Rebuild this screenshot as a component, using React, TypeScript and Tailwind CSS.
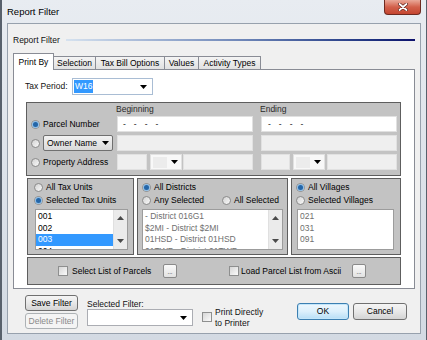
import type { ReactNode } from "react";

function Arrow({ up = false, color = "#000" }: { up?: boolean; color?: string }) {
  return (
    <svg width="7" height="4" viewBox="0 0 7 4" className="shrink-0">
      <path d={up ? "M0 4h7L3.5 0z" : "M0 0h7L3.5 4z"} fill={color} />
    </svg>
  );
}

function Radio({ on = false }: { on?: boolean }) {
  return (
    <span className="w-[9px] h-[9px] shrink-0 rounded-full border border-[#8b8b8b] bg-linear-to-br from-[#d2d2d2] to-[#fafafa] flex items-center justify-center">
      {on && <span className="w-[5px] h-[5px] rounded-full bg-[#2466a8] shadow-[0_0_0_1px_#8dbde6]" />}
    </span>
  );
}

function Check() {
  return <div className="w-[10px] h-[10px] shrink-0 border border-[#8e8f8f] bg-linear-to-br from-[#d6d6d6] to-[#fbfbfb]" />;
}

function Btn({
  children,
  className = "",
  kind = "normal",
}: {
  children: ReactNode;
  className?: string;
  kind?: "normal" | "primary" | "disabled";
}) {
  const look =
    kind === "primary"
      ? "border-[#3c7fb1] bg-linear-to-b from-[#eef7fd] via-[#dcf0fc] to-[#b7def6] shadow-[inset_0_0_0_1px_#c4e6fa]"
      : kind === "disabled"
      ? "border-[#adb2b5] bg-[#f4f4f4] text-[#8a8a8a]"
      : "border-[#707070] bg-linear-to-b from-[#f5f5f5] via-[#e8e8e8] to-[#d4d4d4]";
  return <div className={`flex items-center justify-center rounded-[3px] border ${look} ${className}`}>{children}</div>;
}

function Dots() {
  return (
    <div className="w-[14px] h-[14px] shrink-0 rounded-[2px] border border-[#8a8a8a] bg-linear-to-b from-[#fafafa] to-[#e2e2e2] flex items-end justify-center pb-[2px] text-[6px] leading-none">
      ...
    </div>
  );
}

function ListBox({
  items,
  sel = -1,
  gray = false,
  scroll = true,
  className = "",
}: {
  items: string[];
  sel?: number;
  gray?: boolean;
  scroll?: boolean;
  className?: string;
}) {
  return (
    <div className={`h-[41px] flex bg-white border border-[#9c9c9c] overflow-hidden ${className}`}>
      <div className="flex-1 pt-px overflow-hidden">
        {items.map((it, i) => (
          <div
            key={it}
            className={`h-[11.5px] leading-[11.5px] pl-[2px] whitespace-nowrap ${
              i === sel ? "bg-[#3399ff] text-white" : gray ? "text-[#6f6f6f]" : "text-black"
            }`}
          >
            {it}
          </div>
        ))}
      </div>
      {scroll && (
        <div className="w-[14px] bg-[#ebebeb] border-l border-[#e0e0e0] flex flex-col items-center justify-between py-[6px]">
          <Arrow up color="#4a4a4a" />
          <Arrow color="#4a4a4a" />
        </div>
      )}
    </div>
  );
}

function Field({ className = "", white = false, children }: { className?: string; white?: boolean; children?: ReactNode }) {
  return (
    <div className={`h-[16px] border border-[#e1e1e1] flex items-center ${white ? "bg-white" : "bg-[#efefef]"} ${className}`}>
      {children}
    </div>
  );
}

function MiniCombo() {
  return (
    <div className="w-[32px] h-[16px] shrink-0 border border-[#e1e1e1] bg-[#f8f8f8] flex items-center">
      <span className="ml-[2px] w-[14px] h-[11px] bg-[#ececec]" />
      <span className="ml-auto mr-[3px]">
        <Arrow />
      </span>
    </div>
  );
}

function Dashes() {
  return (
    <div className="flex gap-[8px] pl-[5px] text-[#222]">
      <span>-</span>
      <span>-</span>
      <span>-</span>
      <span>-</span>
    </div>
  );
}

const tabs = [
  { label: "Selection", w: "w-[43px]" },
  { label: "Tax Bill Options", w: "w-[70px]" },
  { label: "Values", w: "w-[35px]" },
  { label: "Activity Types", w: "w-[63px]" },
];

export default function App() {
  return (
    <div className="w-[427px] h-[340px] flex flex-col overflow-hidden bg-linear-to-b from-[#e8ecf1] via-[#dde3ea] to-[#d3dae3] border-l-2 border-r border-[#58616c] font-['Liberation_Sans',Arial,sans-serif] text-[8.5px] leading-none text-black">
      {/* title bar */}
      <div className="h-[23px] flex items-center shrink-0">
        <span className="pl-[5px] text-[9.5px]">Report Filter</span>
        <div className="self-start ml-auto mr-[5px] w-[37px] h-[15px] rounded-b-[4px] border border-t-0 border-[#6e2a20] bg-linear-to-b from-[#e9a899] via-[#d2604b] to-[#c4452f] flex items-center justify-center">
          <svg width="10" height="8" viewBox="0 0 10 8">
            <path d="M1.5 1l7 6M8.5 1l-7 6" stroke="#5a1f18" strokeWidth="3.2" strokeLinecap="round" />
            <path d="M1.5 1l7 6M8.5 1l-7 6" stroke="#ffffff" strokeWidth="1.8" strokeLinecap="round" />
          </svg>
        </div>
      </div>

      {/* client area */}
      <div className="mx-[5px] h-[311px] shrink-0 bg-[#f0f0f0] border border-[#97a1ad] flex flex-col">
        <div className="mt-[11px] h-[10px] flex items-center pl-[5px] pr-[5px]">
          <span className="text-[#111]">Report Filter</span>
          <div className="ml-[6px] flex-1 h-[2px] bg-linear-to-r from-[#d6e2ef] via-[#6f87b8] to-[#0e106c]" />
        </div>

        {/* tabs */}
        <div className="mt-[8px] h-[17px] flex items-end pl-[5px] -mb-px relative z-10">
          <div className="w-[41px] h-[17px] bg-white border border-b-0 border-[#898c95] flex items-center justify-center pt-px">
            Print By
          </div>
          {tabs.map((t) => (
            <div
              key={t.label}
              className={`${t.w} h-[14px] -ml-px border border-[#898c95] bg-linear-to-b from-[#f4f4f4] to-[#e1e1e1] flex items-center justify-center`}
            >
              {t.label}
            </div>
          ))}
        </div>

        {/* tab panel */}
        <div className="ml-[5px] w-[402px] h-[220px] bg-white border border-[#898c95] flex flex-col">
          <div className="mt-[8px] h-[17px] flex items-center pl-[11px]">
            <span className="w-[47px] text-[#111]">Tax Period:</span>
            <div className="w-[81px] h-[17px] border border-[#a9bdd4] bg-white flex items-center px-px">
              <span className="bg-[#3399ff] text-white h-[13px] leading-[13px] px-px">W16</span>
              <span className="ml-auto mr-[4px]">
                <Arrow />
              </span>
            </div>
          </div>

          {/* parcel / owner / address */}
          <div className="mt-[7px] ml-[12px] w-[375px] h-[74px] bg-[#c3c3c3] border border-[#5e5e5e] flex flex-col">
            <div className="h-[13px] flex items-center pl-[89px] text-[#2a2a2a]">
              <span className="w-[144px]">Beginning</span>
              <span>Ending</span>
            </div>
            <div className="grid grid-cols-[87px_144px_136px] gap-y-[3px] pl-[3px] auto-rows-[16px]">
              <div className="flex items-center gap-[3px] pl-px">
                <Radio on />
                <span>Parcel Number</span>
              </div>
              <Field white className="w-[136px]">
                <Dashes />
              </Field>
              <Field white>
                <div className="pl-px">
                  <Dashes />
                </div>
              </Field>

              <div className="flex items-center gap-[3px] pl-px">
                <Radio />
                <div className="w-[70px] h-[16px] rounded-[2px] border border-[#707070] bg-linear-to-b from-[#f3f3f3] to-[#d9d9d9] flex items-center justify-between px-[3px]">
                  <span>Owner Name</span>
                  <Arrow />
                </div>
              </div>
              <Field className="w-[136px]" />
              <Field />

              <div className="flex items-center gap-[3px] pl-px">
                <Radio />
                <span>Property Address</span>
              </div>
              <div className="w-[136px] flex">
                <Field className="w-[30px] shrink-0" />
                <div className="ml-[3px]">
                  <MiniCombo />
                </div>
                <Field className="ml-px flex-1" />
              </div>
              <div className="flex">
                <Field className="w-[29px] shrink-0" />
                <div className="ml-[3px]">
                  <MiniCombo />
                </div>
                <Field className="ml-[2px] flex-1" />
              </div>
            </div>
          </div>

          {/* three option boxes */}
          <div className="mt-[2px] ml-[13px] flex gap-[3px]">
            <div className="w-[107px] h-[77px] bg-[#c3c3c3] border border-[#5e5e5e] pt-[2px] pl-[6px] flex flex-col">
              <div className="h-[12px] flex items-center gap-[3px]">
                <Radio />
                <span>All Tax Units</span>
              </div>
              <div className="mt-px h-[12px] flex items-center gap-[3px]">
                <Radio on />
                <span>Selected Tax Units</span>
              </div>
              <ListBox className="mt-[3px] ml-px w-[93px]" items={["001", "002", "003", "004"]} sel={2} />
            </div>

            <div className="w-[151px] h-[77px] bg-[#c3c3c3] border border-[#5e5e5e] pt-[2px] pl-[4px] flex flex-col">
              <div className="h-[12px] flex items-center gap-[3px]">
                <Radio on />
                <span>All Districts</span>
              </div>
              <div className="mt-px h-[12px] flex items-center">
                <div className="w-[80px] flex items-center gap-[3px]">
                  <Radio />
                  <span>Any Selected</span>
                </div>
                <div className="flex items-center gap-[3px]">
                  <Radio />
                  <span>All Selected</span>
                </div>
              </div>
              <ListBox
                className="mt-[3px] w-[141px]"
                gray
                items={[" - District 016G1", "$2MI - District $2MI", "01HSD - District 01HSD", "01TWP - District 01TWP"]}
              />
            </div>

            <div className="w-[110px] h-[77px] bg-[#c3c3c3] border border-[#5e5e5e] pt-[2px] pl-[4px] flex flex-col">
              <div className="h-[12px] flex items-center gap-[3px]">
                <Radio on />
                <span>All Villages</span>
              </div>
              <div className="mt-px h-[12px] flex items-center gap-[3px]">
                <Radio />
                <span>Selected Villages</span>
              </div>
              <ListBox className="mt-[3px] ml-px w-[97px]" gray scroll={false} items={["021", "031", "091"]} />
            </div>
          </div>

          {/* parcel list files */}
          <div className="mt-[2px] ml-[13px] w-[374px] h-[28px] bg-[#c3c3c3] border border-[#5e5e5e] flex items-center pl-[30px]">
            <Check />
            <span className="ml-[4px] w-[91px]">Select List of Parcels</span>
            <Dots />
            <div className="ml-[52px]">
              <Check />
            </div>
            <span className="ml-[2px] w-[111px]">Load Parcel List from Ascii</span>
            <div className="w-[16px] flex">
              <Dots />
            </div>
          </div>
        </div>

        {/* footer */}
        <div className="mt-[6px] flex items-start pl-[17px] pr-[13px]">
          <div className="flex flex-col gap-[2px]">
            <Btn className="w-[53px] h-[16px]">Save Filter</Btn>
            <Btn className="w-[53px] h-[16px]" kind="disabled">
              Delete Filter
            </Btn>
          </div>
          <div className="ml-[9px] flex flex-col">
            <span className="mt-[4px] h-[10px] leading-[10px] text-[#111]">Selected Filter:</span>
            <div className="w-[106px] h-[17px] border border-[#abadb3] bg-white flex items-center">
              <span className="ml-auto mr-[5px]">
                <Arrow />
              </span>
            </div>
          </div>
          <div className="ml-[9px] mt-[12px] flex items-start">
            <div className="mt-[5px]">
              <Check />
            </div>
            <div className="ml-[3px] flex flex-col leading-[11px] text-[#111]">
              <span>Print Directly</span>
              <span>to Printer</span>
            </div>
          </div>
          <div className="ml-auto mt-[8px] flex gap-[4px]">
            <Btn className="w-[52px] h-[17px]" kind="primary">
              OK
            </Btn>
            <Btn className="w-[54px] h-[17px]">Cancel</Btn>
          </div>
        </div>
      </div>
    </div>
  );
}
